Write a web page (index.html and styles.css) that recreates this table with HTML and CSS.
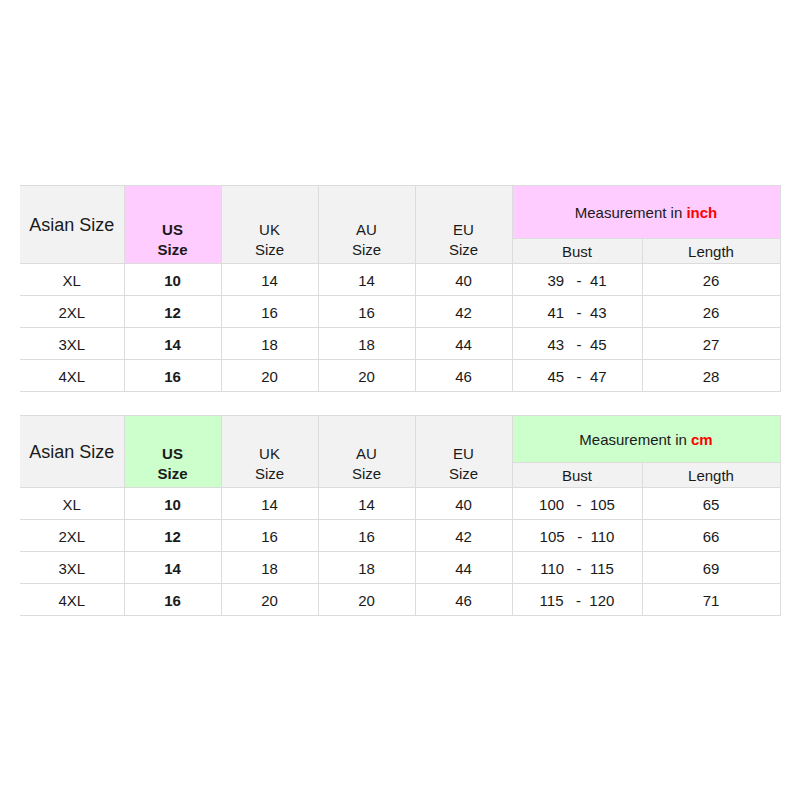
FILE: index.html
```html
<!DOCTYPE html>
<html>
<head>
<meta charset="utf-8">
<link rel="stylesheet" href="styles.css">
</head>
<body>
<div class="page">
  <table class="size-table t-inch">
    <colgroup>
      <col class="c1"><col class="c2"><col class="c3"><col class="c4"><col class="c5"><col class="c6"><col class="c7">
    </colgroup>
    <thead>
      <tr class="h1">
        <th rowspan="2" class="asian">Asian Size</th>
        <th rowspan="2" class="us hl">US<br>Size</th>
        <th rowspan="2" class="sz">UK<br>Size</th>
        <th rowspan="2" class="sz">AU<br>Size</th>
        <th rowspan="2" class="sz">EU<br>Size</th>
        <th colspan="2" class="meas hl">Measurement in <b class="unit">inch</b></th>
      </tr>
      <tr class="h2">
        <th class="sub">Bust</th>
        <th class="sub">Length</th>
      </tr>
    </thead>
    <tbody>
      <tr><td>XL</td><td class="b">10</td><td>14</td><td>14</td><td>40</td><td class="pre">39   -  41</td><td>26</td></tr>
      <tr><td>2XL</td><td class="b">12</td><td>16</td><td>16</td><td>42</td><td class="pre">41   -  43</td><td>26</td></tr>
      <tr><td>3XL</td><td class="b">14</td><td>18</td><td>18</td><td>44</td><td class="pre">43   -  45</td><td>27</td></tr>
      <tr><td>4XL</td><td class="b">16</td><td>20</td><td>20</td><td>46</td><td class="pre">45   -  47</td><td>28</td></tr>
    </tbody>
  </table>

  <table class="size-table t-cm">
    <colgroup>
      <col class="c1"><col class="c2"><col class="c3"><col class="c4"><col class="c5"><col class="c6"><col class="c7">
    </colgroup>
    <thead>
      <tr class="h1">
        <th rowspan="2" class="asian">Asian Size</th>
        <th rowspan="2" class="us hl">US<br>Size</th>
        <th rowspan="2" class="sz">UK<br>Size</th>
        <th rowspan="2" class="sz">AU<br>Size</th>
        <th rowspan="2" class="sz">EU<br>Size</th>
        <th colspan="2" class="meas hl">Measurement in <b class="unit">cm</b></th>
      </tr>
      <tr class="h2">
        <th class="sub">Bust</th>
        <th class="sub">Length</th>
      </tr>
    </thead>
    <tbody>
      <tr><td>XL</td><td class="b">10</td><td>14</td><td>14</td><td>40</td><td class="pre">100   -  105</td><td>65</td></tr>
      <tr><td>2XL</td><td class="b">12</td><td>16</td><td>16</td><td>42</td><td class="pre">105   -  110</td><td>66</td></tr>
      <tr><td>3XL</td><td class="b">14</td><td>18</td><td>18</td><td>44</td><td class="pre">110   -  115</td><td>69</td></tr>
      <tr><td>4XL</td><td class="b">16</td><td>20</td><td>20</td><td>46</td><td class="pre">115   -  120</td><td>71</td></tr>
    </tbody>
  </table>
</div>
</body>
</html>
```

FILE: styles.css
```css
html, body {
  margin: 0;
  padding: 0;
  background: #ffffff;
}

.page {
  padding: 185px 20px 0 20px;
  display: flex;
  flex-direction: column;
  gap: 23px;
  font-family: "Liberation Sans", Arial, sans-serif;
  color: #1a1a1a;
}

.size-table {
  border-collapse: collapse;
  table-layout: fixed;
  width: 760px;
  font-size: 15px;
}

.c1 { width: 104px; }
.c2 { width: 97px; }
.c3 { width: 97px; }
.c4 { width: 97px; }
.c5 { width: 97px; }
.c6 { width: 130px; }
.c7 { width: 138px; }

.size-table th,
.size-table td {
  border: 1px solid #dcdcdc;
  text-align: center;
  padding: 2px 0 0 0;
  font-weight: normal;
  line-height: 20px;
}

.size-table th:first-child,
.size-table td:first-child {
  border-left: none;
}

.size-table thead th {
  background: #f2f2f2;
}

.size-table .asian {
  font-size: 18px;
  vertical-align: middle;
  padding-top: 0;
}

.size-table .sz,
.size-table .us {
  vertical-align: bottom;
  padding-bottom: 3px;
}

.size-table .us {
  font-weight: bold;
}

.t-inch .hl { background: #ffccff !important; }
.t-cm .hl { background: #ccffcc !important; }

.t-inch .h1 { height: 53px; }
.t-cm .h1 { height: 47px; }
.h2 { height: 25px; }

.meas {
  vertical-align: middle;
}

.unit {
  color: #ff0000;
  font-weight: bold;
}

.sub {
  vertical-align: middle;
}

.size-table tbody tr {
  height: 32px;
}

.size-table td {
  vertical-align: middle;
}

.size-table .b {
  font-weight: bold;
}

.pre {
  white-space: pre;
}
```
